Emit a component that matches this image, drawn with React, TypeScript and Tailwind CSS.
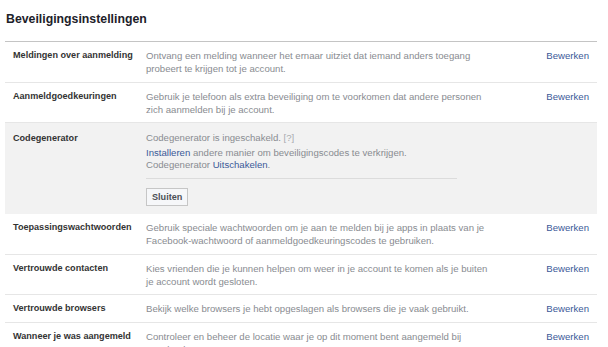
const ROWS_TOP = [
  {
    label: "Meldingen over aanmelding",
    text: "Ontvang een melding wanneer het ernaar uitziet dat iemand anders toegang probeert te krijgen tot je account.",
  },
  {
    label: "Aanmeldgoedkeuringen",
    text: "Gebruik je telefoon als extra beveiliging om te voorkomen dat andere personen zich aanmelden bij je account.",
  },
];

const ROWS_BOTTOM = [
  {
    label: "Toepassingswachtwoorden",
    text: "Gebruik speciale wachtwoorden om je aan te melden bij je apps in plaats van je Facebook-wachtwoord of aanmeldgoedkeuringscodes te gebruiken.",
  },
  {
    label: "Vertrouwde contacten",
    text: "Kies vrienden die je kunnen helpen om weer in je account te komen als je buiten je account wordt gesloten.",
  },
  {
    label: "Vertrouwde browsers",
    text: "Bekijk welke browsers je hebt opgeslagen als browsers die je vaak gebruikt.",
  },
  {
    label: "Wanneer je was aangemeld",
    text: "Controleer en beheer de locatie waar je op dit moment bent aangemeld bij Facebook.",
  },
];

function Row({ label, text }: { label: string; text: string }) {
  return (
    <div className="flex border-b border-[#e6e6e6] pl-2 pr-2 pt-[7px] pb-[6.5px] leading-[13px]">
      <div className="w-[133px] shrink-0 text-[9.1px] font-bold text-[#333333]">{label}</div>
      <div className="w-[344px] shrink-0 text-[9.6px] text-[#898c91]">{text}</div>
      <div className="ml-auto text-[9.6px] text-[#3b5998]">Bewerken</div>
    </div>
  );
}

export default function App() {
  return (
    <div
      className="h-[347px] w-[608px] overflow-hidden bg-white"
      style={{ fontFamily: '"Liberation Sans", Arial, sans-serif' }}
    >
      <div className="ml-[5px] w-[592px]">
        {/* Heading */}
        <h1 className="pl-[1px] pt-[12px] pb-[14px] text-[12.3px] font-bold leading-[15px] text-[#1d2129]">
          Beveiligingsinstellingen
        </h1>

        <div className="border-t border-[#c4c4c4]">
          {ROWS_TOP.map((r) => (
            <Row key={r.label} {...r} />
          ))}

          {/* Expanded code generator */}
          <div className="flex bg-[#f2f2f2] pl-2 pr-2 pt-[8px] pb-[8px] leading-[12px]">
            <div className="w-[133px] shrink-0 pt-[1px] text-[9.1px] font-bold text-[#333333]">
              Codegenerator
            </div>
            <div className="w-[311px] text-[9.6px] text-[#898c91]">
              <p className="leading-[13px]">
                Codegenerator is ingeschakeld. <span className="text-[#a8abaf]">[?]</span>
              </p>
              <p className="mt-[3px]">
                <span className="text-[#3b5998]">Installeren</span> andere manier om beveiligingscodes te
                verkrijgen.
                <br />
                Codegenerator <span className="text-[#3b5998]">Uitschakelen</span>.
              </p>
              <div className="mt-[7px] border-t border-[#dcdcdc]" />
              <button className="mt-[9px] h-[18px] border border-[#c6c6c6] bg-[#f6f7f9] px-[5px] text-[9.1px] font-bold leading-[16px] text-[#4b4f56]">
                Sluiten
              </button>
            </div>
          </div>

          {ROWS_BOTTOM.map((r) => (
            <Row key={r.label} {...r} />
          ))}
        </div>
      </div>
    </div>
  );
}
